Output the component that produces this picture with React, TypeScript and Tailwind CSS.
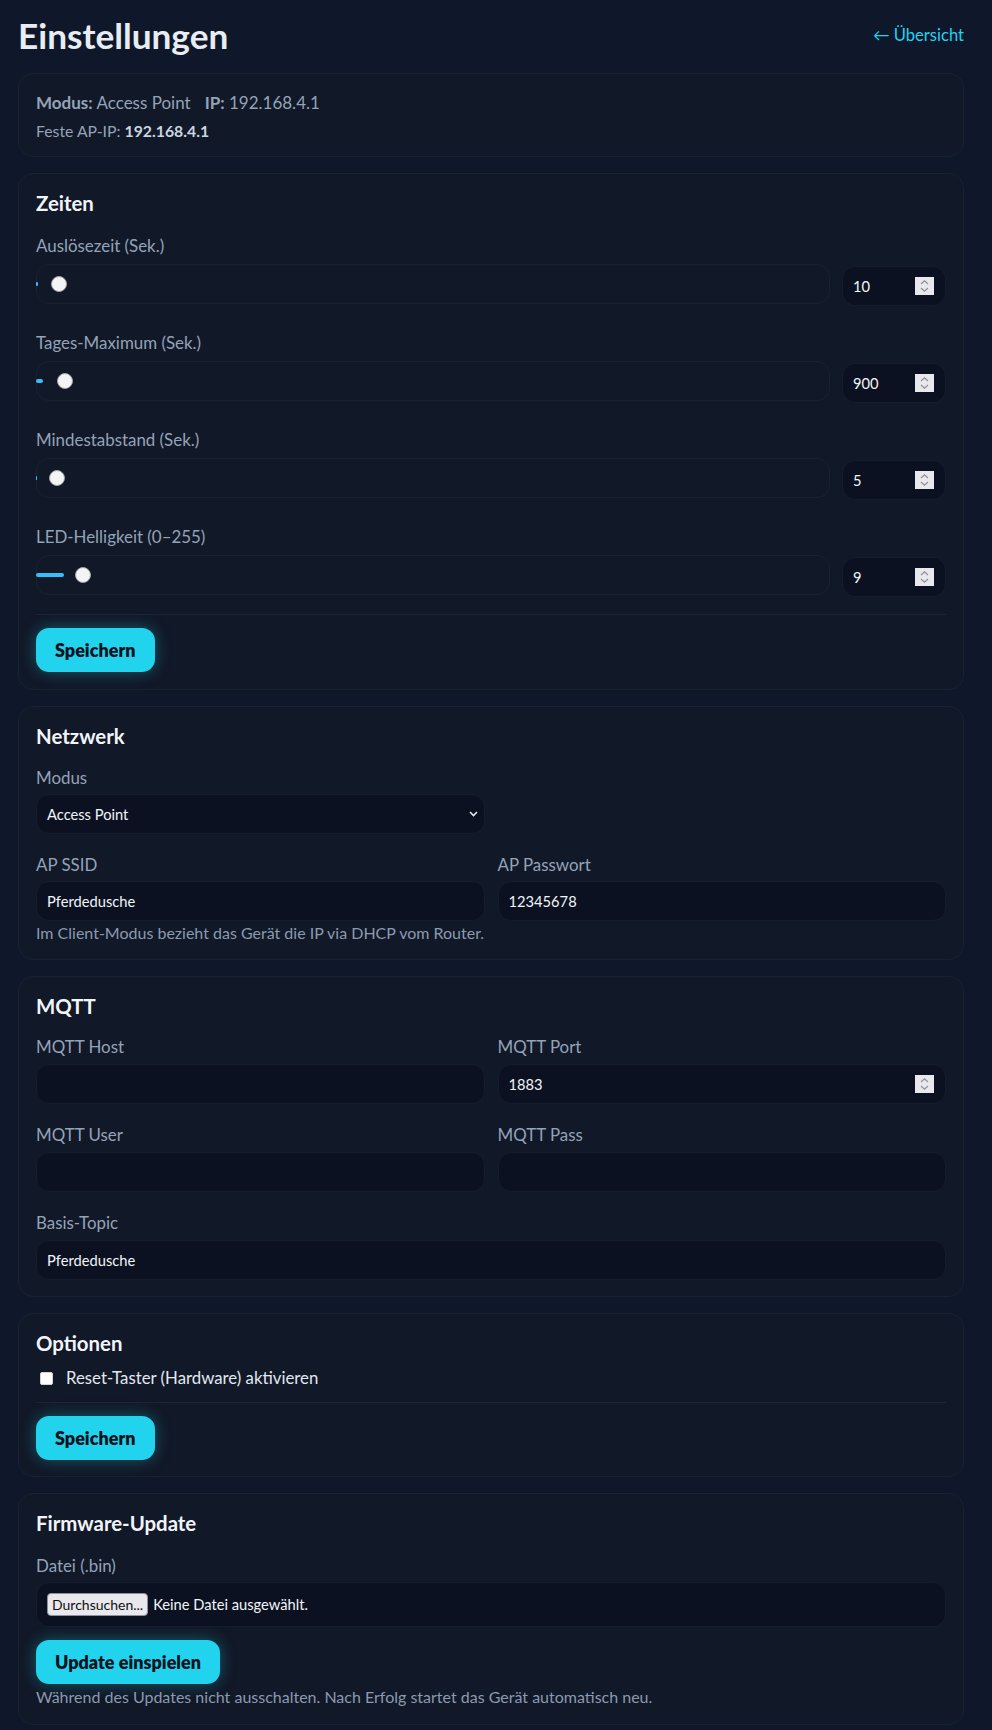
import React from "react"

type SliderRow = {
  label: string
  value: string
  bar: number
  thumb: number
}

const sliders: SliderRow[] = [
  { label: "Auslösezeit (Sek.)", value: "10", bar: 2, thumb: 23 },
  { label: "Tages-Maximum (Sek.)", value: "900", bar: 7, thumb: 29 },
  { label: "Mindestabstand (Sek.)", value: "5", bar: 1, thumb: 21 },
  { label: "LED-Helligkeit (0–255)", value: "9", bar: 28, thumb: 47 },
]

function Spinner() {
  return (
    <div className="flex h-[18px] w-[19px] items-center justify-center bg-[#e9e9ed]">
      <svg width="9" height="14" viewBox="0 0 9 14" fill="none" stroke="#8f8f9d" strokeWidth="1.2">
        <path d="M1 5 L4.5 1.8 L8 5" />
        <path d="M1 9 L4.5 12.2 L8 9" />
      </svg>
    </div>
  )
}

function Card({ children, className = "" }: { children: React.ReactNode; className?: string }) {
  return (
    <div className={`rounded-[15px] border border-[#1a2232] bg-[#111827] px-[17px] pt-[17px] ${className}`}>
      {children}
    </div>
  )
}

function Title({ children }: { children: React.ReactNode }) {
  return <h2 className="h-[24px] text-[20.4px] font-bold leading-[24px] text-[#f1f5f9]">{children}</h2>
}

function Label({ children, mb = "mb-[5px]" }: { children: React.ReactNode; mb?: string }) {
  return <div className={`${mb} h-[24px] text-[16.9px] leading-[24px] text-[#94a3b8]`}>{children}</div>
}

function TextInput({ value, number }: { value?: string; number?: boolean }) {
  return (
    <div className="flex h-[40px] items-center justify-between rounded-[13px] border border-[#151d2c] bg-[#0b1120] pl-[10px] pr-[11px] text-[14.7px] text-[#f1f5f9]">
      <span>{value}</span>
      {number && <Spinner />}
    </div>
  )
}

function SaveButton({ children }: { children: React.ReactNode }) {
  return (
    <button className="inline-flex h-[44px] items-center rounded-[13px] bg-[#22d3ee] px-[19px] text-[18px] font-extrabold text-[#0b1220] shadow-[0_0_16px_rgba(34,211,238,0.35)]">
      {children}
    </button>
  )
}

export default function App() {
  return (
    <div className="min-h-[1730px] bg-[#0f172a] font-['Lato',sans-serif] text-[17px]">
      <div className="ml-[18px] w-[946px] pt-[14px] pb-[8px]">
        <div className="flex h-[42px] items-center justify-between">
          <h1 className="text-[35.2px] font-bold leading-[42px] text-[#e8edf3]">Einstellungen</h1>
          <a className="text-[16.6px] text-[#22d3ee]">← Übersicht</a>
        </div>

        <div className="mt-[17px] flex flex-col gap-[16px]">
          {/* status */}
          <Card className="pb-[14px]">
            <div className="h-[24px] leading-[24px] text-[#94a3b8]">
              <b>Modus:</b> Access Point<span className="ml-[14px]"><b>IP:</b> 192.168.4.1</span>
            </div>
            <div className="mt-[5px] h-[22px] text-[15.8px] leading-[22px] text-[#94a3b8]">
              Feste AP-IP: <b className="text-[#cbd5e1]">192.168.4.1</b>
            </div>
          </Card>

          {/* Zeiten */}
          <Card className="pb-[17px]">
            <Title>Zeiten</Title>
            <div className="mt-[19px] flex flex-col gap-[25px]">
              {sliders.map((s) => (
                <div key={s.label}>
                  <Label mb="mb-[6px]">{s.label}</Label>
                  <div className="flex items-start gap-[12px]">
                    <div className="relative h-[40px] flex-1 rounded-[13px] border border-[#1a2232] bg-[#111827]">
                      <div
                        className="absolute top-[17px] left-[-1px] h-[4px] rounded-full bg-[#38bdf8]"
                        style={{ width: s.bar }}
                      />
                      <div
                        className="absolute top-[11px] h-[16px] w-[16px] rounded-full border border-[#a3a3a3] bg-[#f3f4f6]"
                        style={{ left: s.thumb - 9 }}
                      />
                    </div>
                    <div className="mt-[2px] flex h-[40px] w-[104px] items-center justify-between rounded-[13px] border border-[#151d2c] bg-[#0b1120] pl-[10px] pr-[11px] text-[14.7px] text-[#f1f5f9]">
                      <span>{s.value}</span>
                      <Spinner />
                    </div>
                  </div>
                </div>
              ))}
            </div>
            <div className="mt-[17px] border-t border-[#1d2534] pt-[13px]">
              <SaveButton>Speichern</SaveButton>
            </div>
          </Card>

          {/* Netzwerk */}
          <Card className="pb-[15px]">
            <Title>Netzwerk</Title>
            <div className="mt-[18px] grid grid-cols-2 gap-x-[13px]">
              <div>
                <Label mb="mb-[4px]">Modus</Label>
                <div className="flex h-[40px] items-center justify-between rounded-[13px] border border-[#151d2c] bg-[#0b1120] pl-[10px] pr-[6px] text-[14.7px] text-[#f1f5f9]">
                  <span>Access Point</span>
                  <svg width="9" height="6" viewBox="0 0 9 6" fill="none" stroke="#e5e7eb" strokeWidth="1.6">
                    <path d="M1 1 L4.5 4.5 L8 1" />
                  </svg>
                </div>
              </div>
            </div>
            <div className="mt-[19px] grid grid-cols-2 gap-x-[13px]">
              <div>
                <Label mb="mb-[4px]">AP SSID</Label>
                <TextInput value="Pferdedusche" />
              </div>
              <div>
                <Label mb="mb-[4px]">AP Passwort</Label>
                <TextInput value="12345678" />
              </div>
            </div>
            <p className="mt-[1px] h-[22px] whitespace-nowrap text-[16px] leading-[22px] text-[#8b9ab0]">
              Im Client-Modus bezieht das Gerät die IP via DHCP vom Router.
            </p>
          </Card>

          {/* MQTT */}
          <Card className="pb-[16px]">
            <Title>MQTT</Title>
            <div className="mt-[17px] grid grid-cols-2 gap-x-[13px] gap-y-[19px]">
              <div>
                <Label>MQTT Host</Label>
                <TextInput />
              </div>
              <div>
                <Label>MQTT Port</Label>
                <TextInput value="1883" number />
              </div>
              <div>
                <Label>MQTT User</Label>
                <TextInput />
              </div>
              <div>
                <Label>MQTT Pass</Label>
                <TextInput />
              </div>
              <div className="col-span-2">
                <Label>Basis-Topic</Label>
                <TextInput value="Pferdedusche" />
              </div>
            </div>
          </Card>

          {/* Optionen */}
          <Card className="pb-[16px]">
            <Title>Optionen</Title>
            <label className="mt-[11px] flex h-[24px] items-center text-[16.8px] text-[#e2e8f0]">
              <span className="ml-[4px] h-[13px] w-[13px] rounded-[2px] border border-[#d4d4d8] bg-white" />
              <span className="ml-[13px] leading-[24px]">Reset-Taster (Hardware) aktivieren</span>
            </label>
            <div className="mt-[12px] border-t border-[#1d2534] pt-[13px]">
              <SaveButton>Speichern</SaveButton>
            </div>
          </Card>

          {/* Firmware */}
          <Card className="pb-[16px]">
            <Title>Firmware-Update</Title>
            <div className="mt-[19px]">
              <Label mb="mb-[4px]">Datei (.bin)</Label>
              <div className="flex h-[45px] items-center rounded-[13px] border border-[#151d2c] bg-[#0b1120] pl-[10px] text-[14.7px] text-[#f1f5f9]">
                <span className="flex h-[23px] items-center rounded-[4px] border border-[#8f8f9d] bg-[#e9e9ed] px-[4px] text-[14px] text-[#111]">
                  Durchsuchen...
                </span>
                <span className="ml-[5px]">Keine Datei ausgewählt.</span>
              </div>
            </div>
            <div className="mt-[13px]">
              <SaveButton>Update einspielen</SaveButton>
            </div>
            <p className="mt-[2px] h-[22px] whitespace-nowrap text-[16px] leading-[22px] text-[#8b9ab0]">
              Während des Updates nicht ausschalten. Nach Erfolg startet das Gerät automatisch neu.
            </p>
          </Card>
        </div>
      </div>
    </div>
  )
}
